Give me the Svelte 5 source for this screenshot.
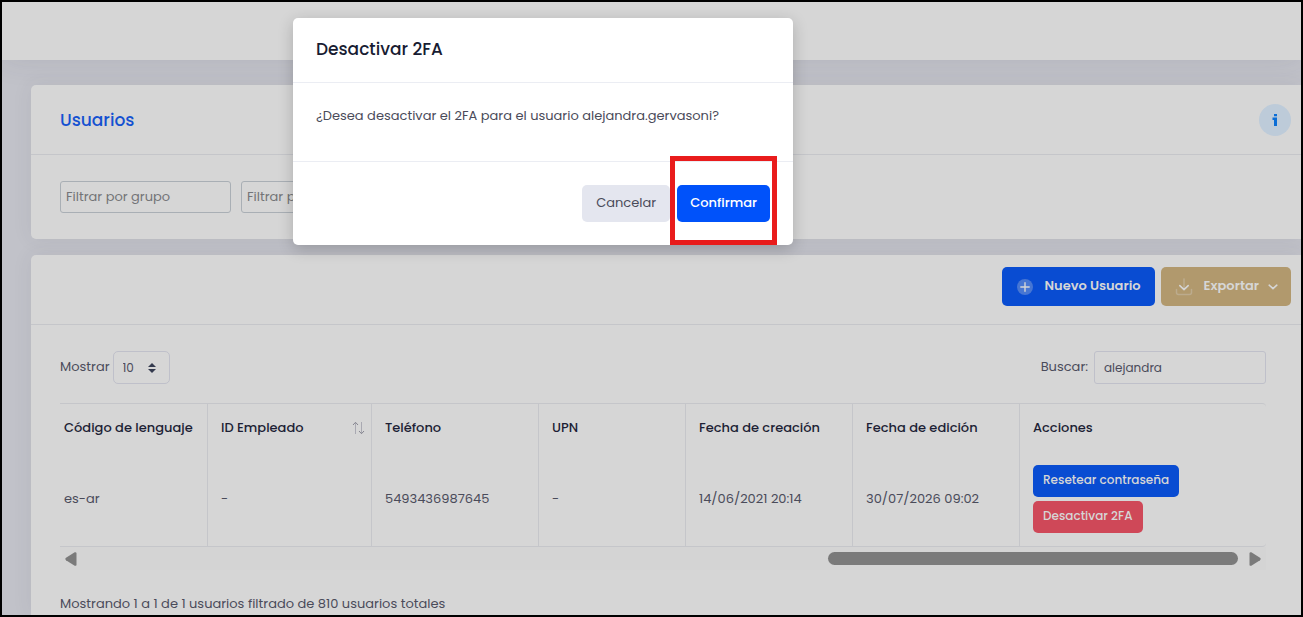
<script>
	let group = '';
	let filter = '';
	let search = 'alejandra';
	let pageSize = '10';

	const columns = [
		{ title: 'Código de lenguaje', name: 'lang' },
		{ title: 'ID Empleado', name: 'employee', sortable: true },
		{ title: 'Teléfono', name: 'phone' },
		{ title: 'UPN', name: 'upn' },
		{ title: 'Fecha de creación', name: 'created' },
		{ title: 'Fecha de edición', name: 'edited' }
	];

	const users = [
		{
			lang: 'es-ar',
			employee: '-',
			phone: '5493436987645',
			upn: '-',
			created: '14/06/2021 20:14',
			edited: '30/07/2026 09:02'
		}
	];
</script>

<div class="page">
	<header class="topbar"></header>

	<main>
		<section class="card">
			<div class="card-header">
				<h1>Usuarios</h1>
				<button class="info" aria-label="Información">
					<svg width="8" height="14" viewBox="0 0 8 14" fill="#0a6dd6">
						<path d="M3 1h3v2.2H3zM1.5 4.6H6V13H3V7H1.5z" />
					</svg>
				</button>
			</div>
			<div class="filters">
				<input type="text" aria-label="Filtrar por grupo" placeholder="Filtrar por grupo" bind:value={group}>
				<input type="text" aria-label="Filtrar por rol" placeholder="Filtrar por rol" bind:value={filter}>
			</div>
		</section>

		<section class="card list">
			<div class="card-header actions">
				<button class="btn primary">
					<svg width="18" height="18" viewBox="0 0 18 18">
						<circle cx="9" cy="9" r="8" fill="#d6d6d6" opacity=".3" />
						<path d="M9 4.8v8.4M4.8 9h8.4" stroke="#d6d6d6" stroke-width="1.4" stroke-linecap="round" />
					</svg>
					<span>Nuevo Usuario</span>
				</button>
				<button class="btn export">
					<svg width="18" height="18" viewBox="0 0 18 18" fill="none" stroke="#d6d6d6" stroke-width="1.5" stroke-linecap="round" stroke-linejoin="round">
						<path d="M1.5 11.5v3a2 2 0 0 0 2 2h11a2 2 0 0 0 2-2v-3M9 1v9" opacity=".3" />
						<path d="M4.8 7.6L9 11.6l4.2-4" />
					</svg>
					<span>Exportar</span>
					<svg class="caret" width="10" height="6" viewBox="0 0 10 6" fill="none" stroke="#d6d6d6" stroke-width="1.6" stroke-linecap="round">
						<path d="M1.2 1.2L5 4.6l3.8-3.4" />
					</svg>
				</button>
			</div>

			<div class="card-body">
				<div class="tools">
					<label class="length">
						Mostrar
						<span class="select">
							<select bind:value={pageSize}>
								<option>10</option>
								<option>25</option>
								<option>50</option>
							</select>
							<svg width="8" height="10" viewBox="0 0 8 10" fill="#343a4e">
								<path d="M0 4l4-4 4 4zM0 6h8L4 10z" />
							</svg>
						</span>
					</label>
					<label class="search">
						Buscar:
						<input type="search" bind:value={search}>
					</label>
				</div>

				<table>
					<thead>
						<tr>
							{#each columns as col}
								<th class={col.name}>
									<div class="head">
										{col.title}
										{#if col.sortable}
											<svg width="13" height="14" viewBox="0 0 13 14" fill="none">
												<path d="M3.5 13V1.5M9.5 1v11.5" stroke="#a9a9b2" />
												<path d="M1 4l2.5-2.7L6 4M7 10l2.5 2.7L12 10" stroke="#85858f" />
											</svg>
										{/if}
									</div>
								</th>
							{/each}
							<th>Acciones</th>
						</tr>
					</thead>
					<tbody>
						{#each users as user}
							<tr>
								{#each columns as col}
									<td>{user[col.name]}</td>
								{/each}
								<td>
									<div class="row-actions">
										<button class="btn-sm reset">Resetear contraseña</button>
										<button class="btn-sm danger">Desactivar 2FA</button>
									</div>
								</td>
							</tr>
						{/each}
					</tbody>
				</table>

				<div class="scrollbar">
					<svg width="12" height="14" viewBox="0 0 12 14" fill="#7a7a7a">
						<path d="M11.5 1v12q-.4 1.2-1.8.7L1 8.2Q-.4 7 1 5.8L9.7.3q1.4-.5 1.8.7z" />
					</svg>
					<div class="thumb"></div>
					<svg width="12" height="14" viewBox="0 0 12 14" fill="#7a7a7a">
						<path d="M.5 1v12q.4 1.2 1.8.7L11 8.2q1.4-1.2 0-2.4L2.3.3Q.9-.2.5 1z" />
					</svg>
				</div>

				<p class="summary">Mostrando 1 a 1 de 1 usuarios filtrado de 810 usuarios totales</p>
			</div>
		</section>
	</main>

	<div class="modal" role="dialog" aria-labelledby="modal-title">
		<h2 id="modal-title">Desactivar 2FA</h2>
		<p>¿Desea desactivar el 2FA para el usuario alejandra.gervasoni?</p>
		<footer>
			<button class="cancel">Cancelar</button>
			<div class="marked">
				<button class="confirm">Confirmar</button>
			</div>
		</footer>
	</div>
</div>

<style>
	:global(body) {
		background: #c1c2c9;
	}

	.page {
		position: relative;
		display: flex;
		flex-direction: column;
		box-sizing: border-box;
		min-height: 100vh;
		border: 2px solid #000;
		overflow: hidden;
		font-family: Poppins, Inter, sans-serif;
		font-size: 13px;
		line-height: 20px;
		color: #4a4b5a;
	}

	button, input, select {
		box-sizing: border-box;
		margin: 0;
		font: inherit;
		color: inherit;
	}

	button {
		border: 0;
		border-radius: 5px;
		padding: 0;
		cursor: pointer;
		white-space: nowrap;
	}

	.topbar {
		height: 58px;
		background: #d6d6d6;
		box-shadow: 0 0 30px rgba(60, 62, 80, .1);
	}

	main {
		flex: 1;
		display: flex;
		flex-direction: column;
		gap: 16px;
		padding: 25px 0 0 29px;
	}

	.card {
		background: #d6d6d6;
		border-radius: 5px 0 0 5px;
		box-shadow: 0 0 20px rgba(60, 62, 80, .08);
	}

	.list {
		flex: 1;
		border-bottom-left-radius: 0;
	}

	.card-header {
		display: flex;
		align-items: center;
		justify-content: space-between;
		box-sizing: border-box;
		height: 70px;
		padding: 0 10px 0 29px;
		border-bottom: 1px solid #c5c6ca;
	}

	h1 {
		margin: 0;
		font-size: 17px;
		font-weight: 500;
		color: #1451d1;
	}

	.info {
		display: flex;
		align-items: center;
		justify-content: center;
		width: 32px;
		height: 32px;
		border-radius: 50%;
		background: #bdcbd9;
	}

	.filters {
		display: flex;
		gap: 10px;
		padding: 26px 29px;
	}

	.filters input {
		width: 171px;
		height: 32px;
		padding: 0 5px;
		border: 1px solid #a9afb5;
		border-radius: 3px;
		background: transparent;
	}

	.filters input::placeholder {
		color: #737477;
	}

	.actions {
		justify-content: flex-end;
		align-items: flex-start;
		gap: 6px;
		padding-top: 12px;
	}

	.btn {
		display: flex;
		align-items: center;
		height: 39px;
		padding: 0 14px;
		font-weight: 600;
		color: #d6d6d6;
	}

	.btn span {
		margin-left: 11px;
		padding-bottom: 2px;
	}

	.caret {
		margin-left: 9px;
	}

	.primary {
		background: #094cd2;
	}

	.export {
		padding-right: 13px;
		background: #b1996d;
	}

	.card-body {
		padding: 26px 35px 0 29px;
	}

	.tools {
		display: flex;
		justify-content: space-between;
		margin-bottom: 19px;
	}

	.tools label {
		display: flex;
		line-height: 31px;
	}

	.length {
		gap: 3px;
	}

	.search {
		gap: 6px;
	}

	.select {
		position: relative;
	}

	.select select {
		display: block;
		appearance: none;
		width: 57px;
		height: 33px;
		padding: 0 9px;
		border: 1px solid #bfc0ca;
		border-radius: 5px;
		background: transparent;
		font-size: 12px;
	}

	.select svg {
		position: absolute;
		top: 12px;
		right: 14px;
		pointer-events: none;
	}

	.tools input {
		width: 172px;
		height: 33px;
		padding: 0 9px;
		border: 1px solid #bfc0ca;
		border-radius: 3px;
		background: transparent;
		font-size: 12px;
	}

	table {
		width: 100%;
		table-layout: fixed;
		border-collapse: separate;
		border-spacing: 0;
		border: 1px solid #c5c6ca;
		border-width: 1px 0;
		border-radius: 0 4px 4px 0;
	}

	th, td {
		box-sizing: border-box;
		padding: 13px;
		text-align: left;
		border-right: 1px solid #c5c6ca;
	}

	th {
		height: 47px;
		font-weight: 500;
		color: #1d1f35;
		white-space: nowrap;
	}

	td {
		height: 95px;
	}

	th:first-child, td:first-child {
		padding-left: 4px;
	}

	th:last-child, td:last-child {
		border-right: 0;
	}

	.lang {
		width: 148px;
	}

	.employee {
		width: 164px;
		padding-right: 6px;
	}

	.phone, .created, .edited {
		width: 167px;
	}

	.upn {
		width: 147px;
	}

	.head {
		display: flex;
		align-items: center;
		justify-content: space-between;
	}

	.row-actions {
		display: flex;
		flex-direction: column;
		align-items: flex-start;
		gap: 4px;
	}

	.btn-sm {
		height: 32px;
		padding: 0 10px 2px;
		font-size: 12px;
		font-weight: 500;
		color: #d6d6d6;
	}

	.reset {
		background: #094cd2;
	}

	.danger {
		background: #cf4858;
	}

	.scrollbar {
		display: flex;
		align-items: center;
		height: 23px;
		background: #d4d4d4;
	}

	.scrollbar svg {
		margin: 0 5px;
	}

	.thumb {
		width: 34%;
		height: 13px;
		margin: 0 6px 0 auto;
		border-radius: 7px;
		background: #7a7a7a;
	}

	.summary {
		margin: 24px 0 0;
	}

	.modal {
		position: absolute;
		top: 16px;
		left: 291px;
		width: 500px;
		border-radius: 5px;
		background: #fff;
		box-shadow: 0 4px 16px rgba(0, 0, 0, .2);
	}

	.modal h2 {
		margin: 0;
		padding: 21px 23px 23px;
		border-bottom: 1px solid #ebedf3;
		font-size: 17px;
		font-weight: 500;
		color: #181c32;
	}

	.modal p {
		margin: 0;
		padding: 23px 23px 35px;
		border-bottom: 1px solid #ebedf3;
	}

	.modal footer {
		display: flex;
		justify-content: flex-end;
		gap: 7px;
		padding: 23px;
	}

	.modal button {
		height: 37px;
		padding: 0 14px 2px;
	}

	.modal .cancel {
		background: #e4e6ef;
	}

	.modal .confirm {
		padding: 0 13px 2px;
		background: #0052fa;
		color: #fff;
		font-weight: 500;
	}

	.marked {
		position: relative;
	}

	.marked::after {
		content: '';
		position: absolute;
		inset: -29px -7px -23px -7px;
		border: 5px solid #e91c1c;
		pointer-events: none;
	}
</style>
